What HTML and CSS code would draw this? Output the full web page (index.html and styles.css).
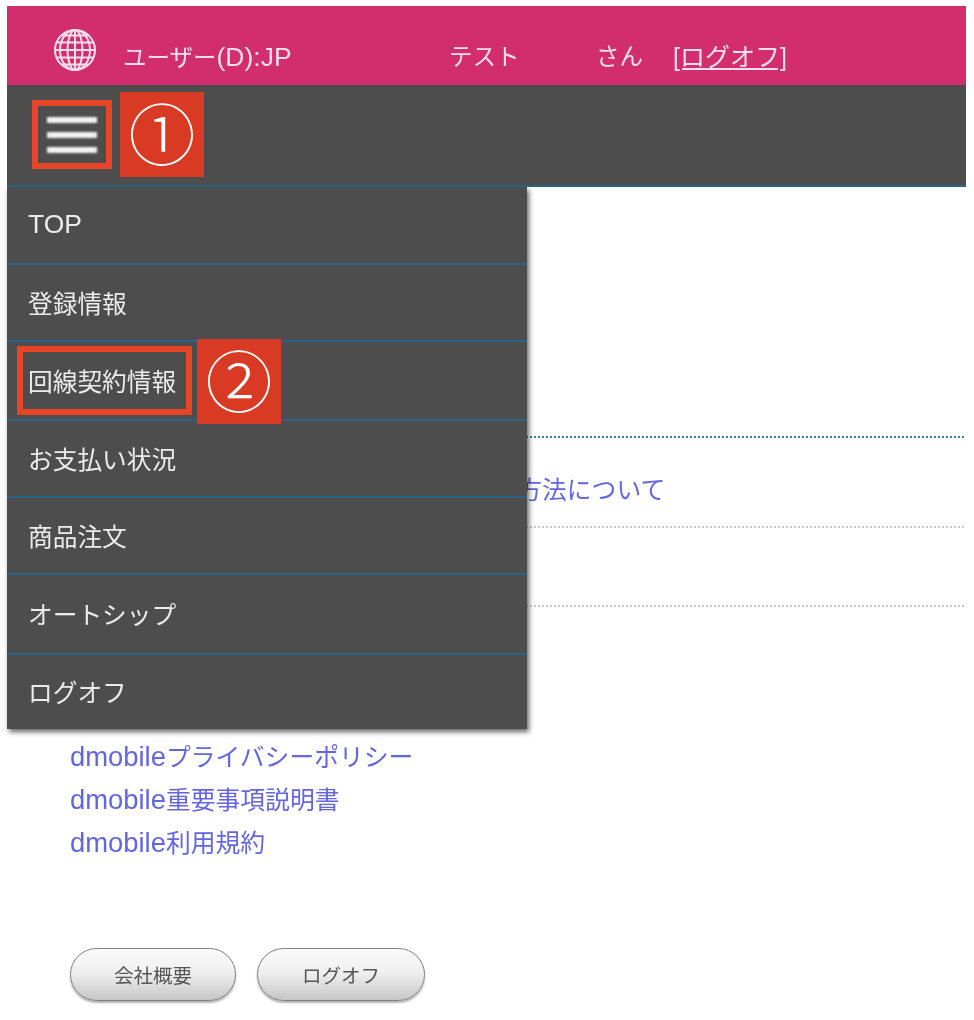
FILE: index.html
```html
<!DOCTYPE html>
<html lang="ja">
<head>
<meta charset="utf-8">
<title>dmobile</title>
<link rel="stylesheet" href="styles.css">
</head>
<body>
<div class="page">
  <header class="topbar">
    <svg class="globe" viewBox="0 0 44 44" aria-hidden="true">
      <g fill="none" stroke="#f6dfe9" stroke-width="2">
        <circle cx="22" cy="22" r="20"/>
        <ellipse cx="22" cy="22" rx="15" ry="20"/>
        <ellipse cx="22" cy="22" rx="7.500" ry="20"/>
        <path d="M22 2V42M2 22H42M3.500 14.500H40.500M3.500 29.500H40.500M8.500 7.500H35.500M8.500 36.500H35.500"/>
      </g>
    </svg>
    <span class="user">ユーザー<span class="latin-head">(D):JP</span></span>
    <span class="name">テスト</span>
    <span class="san">さん</span>
    <a class="logoff" href="#">[ログオフ]</a>
  </header>
  <div class="toolbar">
    <div class="mark-box burger-box">
      <span class="bar"></span><span class="bar"></span><span class="bar"></span>
    </div>
    <div class="badge badge-one"><span class="badge-glyph">①</span></div>
  </div>
  <main class="content">
    <nav class="menu">
      <a class="item" href="#"><span class="soft latin-menu">TOP</span></a>
      <a class="item" href="#"><span class="soft">登録情報</span></a>
      <a class="item item-marked" href="#"><span class="mark-box line-box"><span class="soft">回線契約情報</span></span><span class="badge badge-two"><span class="badge-glyph">②</span></span></a>
      <a class="item" href="#"><span class="soft">お支払い状況</span></a>
      <a class="item" href="#"><span class="soft">商品注文</span></a>
      <a class="item" href="#"><span class="soft">オートシップ</span></a>
      <a class="item" href="#"><span class="soft">ログオフ</span></a>
    </nav>
    <div class="rule-row"></div>
    <div class="info-row"><a class="link" href="#">お支払い方法について</a></div>
    <div class="empty-row"></div>
    <ul class="links">
      <li><a class="link" href="#"><span class="latin-link">dmobile</span>プライバシーポリシー</a></li>
      <li><a class="link" href="#"><span class="latin-link">dmobile</span>重要事項説明書</a></li>
      <li><a class="link" href="#"><span class="latin-link">dmobile</span>利用規約</a></li>
    </ul>
    <div class="buttons">
      <a class="pill pill-a" href="#"><span class="soft">会社概要</span></a>
      <a class="pill pill-b" href="#"><span class="soft">ログオフ</span></a>
    </div>
  </main>
</div>
</body>
</html>
```

FILE: styles.css
```css
* { box-sizing: border-box; }
html, body { margin: 0; padding: 0; background: #fff; }
body {
  font-family: "Liberation Sans", "Noto Sans CJK JP", sans-serif;
  overflow: hidden;
  height: 1020px;
}
a { text-decoration: none; color: inherit; }
.page { margin: 6px 8px 0 7px; }
.soft { filter: blur(0.5px); }

.topbar {
  height: 79px;
  background: #d22e6e;
  color: #f6dfe9;
  display: flex;
  align-items: center;
  font-size: 23.500px;
  padding: 9px 0 0 46px;
}
.globe { width: 44px; height: 44px; flex: none; filter: blur(0.5px); }
.user, .name, .san, .logoff { margin-top: 14px; filter: blur(0.5px); line-height: 30px; }
.user { margin-left: 26px; width: 326px; }
.latin-head { font-size: 26.500px; }
.name { width: 149px; }
.san { width: 75px; margin-left: -2px; }
.logoff { text-decoration: underline; font-size: 25px; margin-left: 2px; }

.toolbar {
  height: 102px;
  background: #4d4d4d;
  border-bottom: 2px solid #2c6384;
  display: flex;
  position: relative;
}
.mark-box { border: 6px solid #e84427; }
.burger-box {
  width: 80px;
  height: 69px;
  margin: 15px 0 0 25px;
  display: flex;
  flex-direction: column;
  align-items: center;
  justify-content: center;
  gap: 9px;
}
.bar {
  width: 50px;
  height: 6px;
  background: #f2f2f2;
  border-radius: 1px;
  filter: blur(0.9px);
}
.badge {
  position: absolute;
  width: 84px;
  height: 85px;
  padding-bottom: 8px;
  background: #d93a24;
  color: #fff;
  display: flex;
  align-items: center;
  justify-content: center;
}
.badge-glyph {
  font-family: "Noto Sans CJK JP", sans-serif;
  font-weight: 300;
  font-size: 67px;
  line-height: 74px;
}
.badge-one { left: 113px; top: 7px; }
.badge-two { left: 190px; top: -5px; }

.content { position: relative; height: 835px; background: #fff; }
.menu {
  position: absolute;
  left: 0;
  top: 0;
  width: 520px;
  height: 542px;
  background: #4d4d4d;
  box-shadow: 2px 3px 5px rgba(0, 0, 0, 0.6);
  color: #ececec;
  font-size: 24.700px;
  display: flex;
  flex-direction: column;
  z-index: 2;
}
.latin-menu { font-size: 26.500px; }
.item {
  position: relative;
  display: flex;
  align-items: center;
  padding: 0 0 4px 21px;
  height: 78px;
  border-top: 2px solid transparent;
  border-bottom: 2px solid #2c6384;
}
.item-marked { height: 79px; }
.item:nth-child(2) { height: 77px; }
.item:nth-child(4), .item:nth-child(5) { height: 77px; }
.item:nth-child(6) { height: 80px; }
.item:last-child { height: 74px; border-bottom: 0; }
.line-box {
  position: absolute;
  left: 10px;
  top: 2px;
  width: 175px;
  height: 69px;
  display: flex;
  align-items: center;
  padding: 0 0 2px 5px;
}

.rule-row { height: 251px; border-bottom: 2px dotted #3f7fa8; margin-right: 2px; }
.info-row {
  height: 90px;
  border-bottom: 2px dotted #c8c8c8;
  margin-right: 2px;
  padding-top: 38px;
  padding-left: 411px;
  line-height: 30px;
}
.empty-row { height: 79px; border-bottom: 2px dotted #c8c8c8; margin-right: 2px; }
.link { color: #6465e2; font-size: 24.800px; filter: blur(0.5px); display: inline-block; }
.latin-link { font-size: 27.400px; }
.links {
  list-style: none;
  margin: 128px 0 0;
  padding: 0 0 0 63px;
}
.links li { height: 43px; line-height: 43px; }
.links .link { line-height: 43px; }
.buttons {
  display: flex;
  gap: 21px;
  padding-left: 63px;
  margin-top: 84px;
}
.pill {
  height: 53px;
  border-radius: 27px;
  border: 1.500px solid #7f7f7f;
  background: linear-gradient(#fafafa, #f0f0f0 45%, #c6c6c6);
  box-shadow: 0 2px 2px rgba(0, 0, 0, 0.3);
  color: #555;
  font-size: 19.500px;
  display: flex;
  align-items: center;
  justify-content: center;
}
.pill-a { width: 166px; }
.pill-b { width: 168px; }
```
